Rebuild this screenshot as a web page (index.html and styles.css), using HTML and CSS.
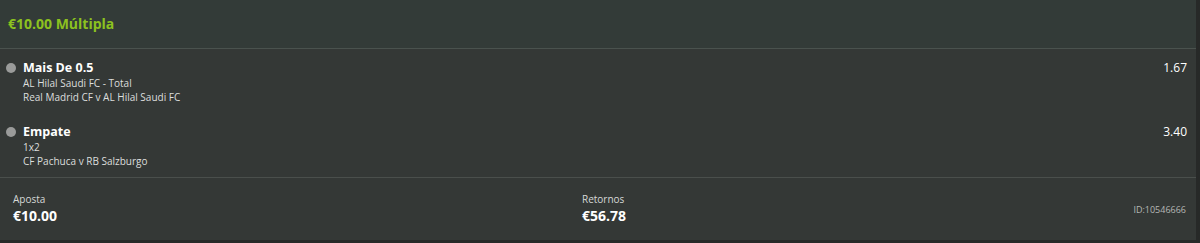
FILE: index.html
```html
<!DOCTYPE html>
<html>
<head>
<meta charset="utf-8">
<link rel="stylesheet" href="styles.css">
</head>
<body>
<div class="card">
  <div class="header">€10.00 Múltipla</div>
  <div class="selections">
    <div class="sel">
      <span class="dot"></span>
      <div class="info">
        <div class="name">Mais De 0.5</div>
        <div class="sub">AL Hilal Saudi FC - Total</div>
        <div class="sub">Real Madrid CF v AL Hilal Saudi FC</div>
      </div>
      <div class="odds">1.67</div>
    </div>
    <div class="sel">
      <span class="dot"></span>
      <div class="info">
        <div class="name">Empate</div>
        <div class="sub">1x2</div>
        <div class="sub">CF Pachuca v RB Salzburgo</div>
      </div>
      <div class="odds">3.40</div>
    </div>
  </div>
  <div class="footer">
    <div class="col">
      <div class="label">Aposta</div>
      <div class="value">€10.00</div>
    </div>
    <div class="col">
      <div class="label">Retornos</div>
      <div class="value">€56.78</div>
    </div>
    <div class="betid">ID:10546666</div>
  </div>
</div>
</body>
</html>
```
FILE: styles.css
```css
* { box-sizing: border-box; }
html, body { margin: 0; padding: 0; }
body {
  background: #272928;
  width: 1200px;
  height: 243px;
  overflow: hidden;
  font-family: "Open Sans", "Noto Sans", sans-serif;
}
.card {
  width: 1196px;
  height: 240px;
  background: #343836;
  display: flex;
  flex-direction: column;
}
.header {
  height: 49px;
  background: #333b38;
  border-bottom: 1px solid #4a524e;
  color: #8cc21f;
  font-weight: 700;
  font-size: 14px;
  line-height: 48px;
  padding-left: 8px;
}
.selections {
  padding: 11px 9px 0 6px;
  border-bottom: 1px solid #4a4f4c;
  height: 129px;
  display: flex;
  flex-direction: column;
  gap: 20px;
}
.sel {
  display: flex;
  align-items: flex-start;
}
.dot {
  width: 10px;
  height: 10px;
  border-radius: 50%;
  background: #9a9b9a;
  margin-top: 3px;
  margin-right: 7px;
  flex: none;
}
.info { flex: 1; }
.name {
  color: #ffffff;
  font-weight: 700;
  font-size: 12.5px;
  line-height: 16px;
}
.sub {
  color: #dcdedd;
  font-size: 10px;
  line-height: 14px;
}
.odds {
  color: #ffffff;
  font-size: 12px;
  line-height: 16px;
}
.footer {
  flex: 1;
  display: grid;
  grid-template-columns: 569px 1fr auto;
  align-items: start;
  padding: 14px 10px 0 13px;
}
.label {
  color: #d6d8d7;
  font-size: 10px;
  line-height: 14px;
}
.value {
  color: #ffffff;
  font-weight: 700;
  font-size: 14px;
  line-height: 20px;
}
.betid {
  color: #b4b7b5;
  font-size: 9px;
  line-height: 12px;
  margin-top: 12px;
}
```
